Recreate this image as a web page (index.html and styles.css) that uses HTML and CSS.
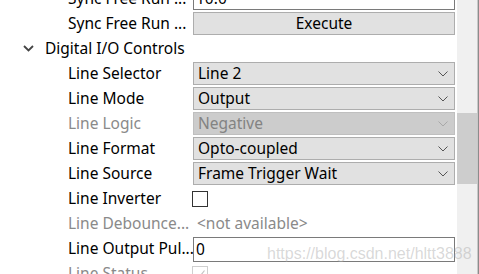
FILE: index.html
```html
<!DOCTYPE html>
<html>
<head>
<meta charset="utf-8">
<link rel="stylesheet" href="styles.css">
</head>
<body>
<div class="window">
  <div class="list">
    <div class="row">
      <div class="label">Sync Free Run ...</div>
      <div class="value"><div class="input">10.0</div></div>
    </div>
    <div class="row">
      <div class="label">Sync Free Run ...</div>
      <div class="value"><div class="btn">Execute</div></div>
    </div>
    <div class="row category">
      <span class="caret"><svg width="11" height="7" viewBox="0 0 11 7"><path d="M1 1 L5.5 5.5 L10 1" fill="none" stroke="#444" stroke-width="1.8"/></svg></span>
      <span class="cat-label">Digital I/O Controls</span>
    </div>
    <div class="row">
      <div class="label">Line Selector</div>
      <div class="value"><div class="combo"><span>Line 2</span><svg class="arrow" width="10" height="6" viewBox="0 0 10 6"><path d="M0.5 0.5 L5 5 L9.5 0.5" fill="none" stroke="#555" stroke-width="1"/></svg></div></div>
    </div>
    <div class="row">
      <div class="label">Line Mode</div>
      <div class="value"><div class="combo"><span>Output</span><svg class="arrow" width="10" height="6" viewBox="0 0 10 6"><path d="M0.5 0.5 L5 5 L9.5 0.5" fill="none" stroke="#555" stroke-width="1"/></svg></div></div>
    </div>
    <div class="row disabled">
      <div class="label">Line Logic</div>
      <div class="value"><div class="combo"><span>Negative</span><svg class="arrow" width="10" height="6" viewBox="0 0 10 6"><path d="M0.5 0.5 L5 5 L9.5 0.5" fill="none" stroke="#a8a8a8" stroke-width="1"/></svg></div></div>
    </div>
    <div class="row">
      <div class="label">Line Format</div>
      <div class="value"><div class="combo"><span>Opto-coupled</span><svg class="arrow" width="10" height="6" viewBox="0 0 10 6"><path d="M0.5 0.5 L5 5 L9.5 0.5" fill="none" stroke="#555" stroke-width="1"/></svg></div></div>
    </div>
    <div class="row">
      <div class="label">Line Source</div>
      <div class="value"><div class="combo"><span>Frame Trigger Wait</span><svg class="arrow" width="10" height="6" viewBox="0 0 10 6"><path d="M0.5 0.5 L5 5 L9.5 0.5" fill="none" stroke="#555" stroke-width="1"/></svg></div></div>
    </div>
    <div class="row">
      <div class="label">Line Inverter</div>
      <div class="value"><div class="check"></div></div>
    </div>
    <div class="row disabled">
      <div class="label">Line Debounce...</div>
      <div class="value"><div class="na">&lt;not available&gt;</div></div>
    </div>
    <div class="row">
      <div class="label">Line Output Pul...</div>
      <div class="value"><div class="input tall">0</div></div>
    </div>
    <div class="row disabled">
      <div class="label">Line Status</div>
      <div class="value"><div class="check off"><svg width="14" height="14" viewBox="0 0 14 14"><path d="M3 7.5 L6 10.5 L11.5 3.5" fill="none" stroke="#c4c4c4" stroke-width="1.2"/></svg></div></div>
    </div>
  </div>
  <div class="scrollbar"><div class="thumb"></div></div>
  <div class="edge"></div>
</div>
<div class="watermark">https://blog.csdn.net/hltt3888</div>
</body>
</html>
```
FILE: styles.css
```css
html, body {
  margin: 0;
  padding: 0;
  background: #ffffff;
}
body {
  width: 479px;
  height: 274px;
  overflow: hidden;
  position: relative;
  font-family: "Noto Sans", "Noto Sans CJK SC", sans-serif;
  font-size: 15.5px;
  color: #000;
}
.window {
  display: flex;
  height: 274px;
  overflow: hidden;
}
.list {
  width: 457px;
  margin-top: -13px;
  flex: none;
}
.row {
  display: grid;
  grid-template-columns: 193px 262px;
  height: 23px;
  margin-bottom: 2px;
  line-height: 23px;
}
.label {
  padding-left: 68px;
  white-space: nowrap;
  overflow: hidden;
}
.value {
  display: flex;
  align-items: center;
  min-width: 0;
}
.input {
  box-sizing: border-box;
  width: 262px;
  height: 23px;
  border: 1px solid #7a7a7a;
  background: #fff;
  padding-left: 2px;
  line-height: 21px;
}
.input.tall {
  height: 25px;
  line-height: 23px;
}
.btn {
  box-sizing: border-box;
  width: 262px;
  height: 23px;
  border: 1px solid #adadad;
  background: #e1e1e1;
  text-align: center;
  line-height: 21px;
}
.combo {
  box-sizing: border-box;
  width: 262px;
  height: 23px;
  border: 1px solid #adadad;
  background: #e1e1e1;
  padding-left: 4px;
  padding-right: 6px;
  line-height: 21px;
  display: flex;
  justify-content: space-between;
  align-items: center;
}
.arrow {
  flex: none;
}
.category {
  display: flex;
  align-items: center;
}
.caret {
  width: 22px;
  padding-left: 23px;
  display: flex;
  align-items: center;
  height: 23px;
}
.cat-label {
  white-space: nowrap;
}
.disabled .label,
.disabled .na {
  color: #8a8a8a;
}
.disabled .combo {
  background: #cccccc;
  border-color: #bfbfbf;
  color: #838383;
}
.na {
  padding-left: 4px;
}
.check {
  box-sizing: border-box;
  width: 16px;
  height: 16px;
  border: 1px solid #333;
  background: #fff;
  margin-left: -1px;
}
.check.off {
  border-color: #cfcfcf;
  display: flex;
  align-items: center;
  justify-content: center;
}
.scrollbar {
  width: 20px;
  height: 274px;
  background: #f0f0f0;
  flex: none;
}
.thumb {
  margin-top: 113px;
  height: 71px;
  background: #cdcdcd;
}
.edge {
  width: 2px;
  flex: none;
  border-left: 1px solid #c8c8c8;
  box-sizing: border-box;
  background: #8c8c8c;
}
.watermark {
  position: absolute;
  left: 267px;
  top: 244px;
  font-family: "Liberation Sans", Arial, sans-serif;
  font-size: 16px;
  line-height: 19px;
  color: rgba(170, 170, 170, 0.45);
  white-space: nowrap;
}
```
